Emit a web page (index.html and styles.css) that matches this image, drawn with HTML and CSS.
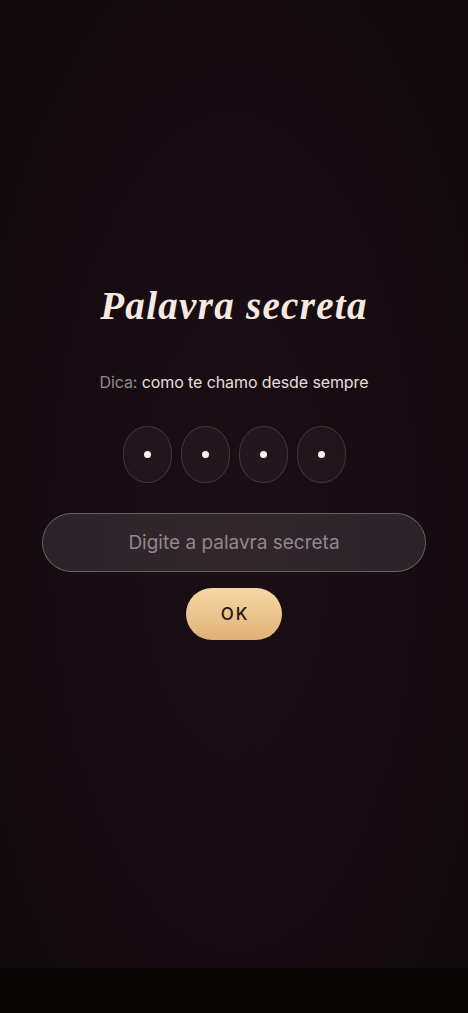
FILE: index.html
```html
<!DOCTYPE html>
<html lang="pt">
<head>
<meta charset="utf-8">
<title>Palavra secreta</title>
<link rel="stylesheet" href="styles.css">
</head>
<body>
<main class="screen">
  <h1 class="title">Palavra secreta</h1>
  <p class="hint"><span class="hint-label">Dica:</span> como te chamo desde sempre</p>
  <div class="pins">
    <div class="pin"><span class="dot"></span></div>
    <div class="pin"><span class="dot"></span></div>
    <div class="pin"><span class="dot"></span></div>
    <div class="pin"><span class="dot"></span></div>
  </div>
  <input class="field" type="text" placeholder="Digite a palavra secreta">
  <button class="ok" type="button">OK</button>
</main>
<div class="navbar"></div>
</body>
</html>
```
FILE: styles.css
```css
html, body {
  margin: 0;
  padding: 0;
  background: #080605;
}
body {
  width: 468px;
  height: 1013px;
  display: flex;
  flex-direction: column;
  font-family: "Inter", "Open Sans", sans-serif;
}
.screen {
  height: 968px;
  box-sizing: border-box;
  padding-top: 283px;
  display: flex;
  flex-direction: column;
  align-items: center;
  background: radial-gradient(ellipse at 50% 55%, #1a0f14 0%, #150b10 60%, #12090d 100%);
}
.title {
  margin: 0;
  font-family: "Liberation Serif", "DejaVu Serif", serif;
  font-style: italic;
  font-weight: 700;
  font-size: 39px;
  line-height: 46px;
  color: #f6e9e0;
  letter-spacing: 1.3px;
}
.hint {
  margin: 42px 0 0;
  font-size: 16px;
  line-height: 22px;
  color: #e9dddd;
  letter-spacing: -0.1px;
}
.hint-label {
  color: #958a8d;
}
.pins {
  margin-top: 33px;
  display: flex;
  gap: 9px;
}
.pin {
  width: 49px;
  height: 57px;
  box-sizing: border-box;
  border: 1px solid rgba(255, 255, 255, 0.14);
  border-radius: 24px / 27px;
  background: rgba(255, 255, 255, 0.04);
  display: flex;
  align-items: center;
  justify-content: center;
}
.dot {
  width: 7px;
  height: 7px;
  border-radius: 50%;
  background: #fbf3ef;
}
.field {
  margin-top: 30px;
  width: 384px;
  height: 59px;
  box-sizing: border-box;
  border: 1px solid rgba(255, 255, 255, 0.28);
  border-radius: 30px;
  background: rgba(255, 255, 255, 0.1);
  color: #eee;
  font-family: "Inter", "Open Sans", sans-serif;
  font-size: 19px;
  text-align: center;
  outline: none;
}
.field::placeholder {
  color: #93878b;
}
.ok {
  margin-top: 16px;
  width: 96px;
  height: 52px;
  border: none;
  border-radius: 26px;
  background: linear-gradient(180deg, #f6d8a6 0%, #e9c18b 60%, #dfb077 100%);
  color: #2a1518;
  font-family: "Inter", "Open Sans", sans-serif;
  font-size: 17px;
  font-weight: 500;
  letter-spacing: 2px;
  padding: 0 0 0 2px;
}
.navbar {
  height: 45px;
  background: #080605;
}
```
